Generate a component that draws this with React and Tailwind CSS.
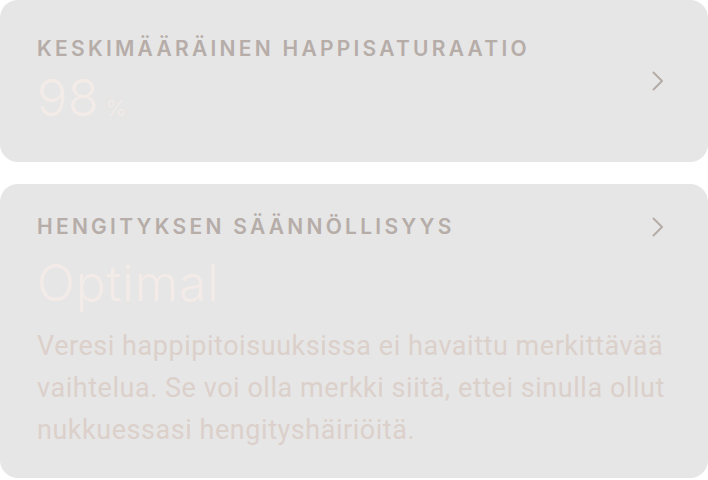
import React from "react";

function Chevron() {
  return (
    <svg width="14" height="20" viewBox="0 0 14 20" fill="none" className="shrink-0">
      <path d="M2.5 1.5 L11 10 L2.5 18.5" stroke="#b5aca8" strokeWidth="2" strokeLinecap="round" strokeLinejoin="round" />
    </svg>
  );
}

export default function App() {
  return (
    <div className="w-[708px] h-[480px] bg-white flex flex-col gap-[22px]" style={{ fontFamily: "Inter, 'Liberation Sans', sans-serif" }}>
      <div className="h-[162px] rounded-[18px] bg-[#e6e6e6] pl-[37px] pr-[43px] flex items-center justify-between">
        <div className="flex flex-col">
          <div className="text-[21px] leading-[24px] font-semibold tracking-[0.155em] text-[#b6ada9] uppercase">
            Keskimääräinen happisaturaatio
          </div>
          <div className="flex items-baseline mt-[9px]">
            <span className="text-[51px] leading-[56px] font-light text-[#f3ebe7]">98</span>
            <span className="ml-[7px] text-[22px] font-light text-[#f3ebe7]">%</span>
          </div>
        </div>
        <Chevron />
      </div>
      <div className="h-[294px] rounded-[18px] bg-[#e6e6e6] pl-[37px] pr-[43px] pt-[31px]">
        <div className="flex items-center justify-between">
          <div className="text-[21px] leading-[24px] font-semibold tracking-[0.155em] text-[#b6ada9] uppercase">
            Hengityksen säännöllisyys
          </div>
          <Chevron />
        </div>
        <div className="mt-[14px] text-[50px] leading-[60px] font-light tracking-[0.015em] text-[#f3ebe7]">Optimal</div>
        <div className="mt-[12px] text-[27px] leading-[42px] tracking-[0.02em] whitespace-nowrap text-[#dcd0cb]" style={{ fontFamily: "Roboto, sans-serif" }}>
          <span className="block">Veresi happipitoisuuksissa ei havaittu merkittävää</span>
          <span className="block">vaihtelua. Se voi olla merkki siitä, ettei sinulla ollut</span>
          <span className="block">nukkuessasi hengityshäiriöitä.</span>
        </div>
      </div>
    </div>
  );
}
